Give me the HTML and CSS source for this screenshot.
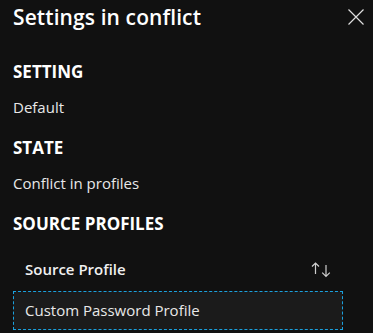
FILE: index.html
```html
<!DOCTYPE html>
<html lang="en">
  <head>
    <meta charset="UTF-8" />
    <meta name="viewport" content="width=device-width, initial-scale=1.0" />
    <title>Settings in conflict</title>
    <link rel="stylesheet" href="styles.css">
  </head>
  <body>
    <main class="panel">
      <header class="panel-header">
        <h1 class="panel-title">Settings in conflict</h1>
        <button class="close-btn" aria-label="Close">
          <svg width="16" height="16" viewBox="0 0 16 16">
            <path d="M0.5 0.5 L15.5 15.5 M15.5 0.5 L0.5 15.5" stroke="#dedede" stroke-width="1.2" fill="none" />
          </svg>
        </button>
      </header>

      <h2 class="label">SETTING</h2>
      <p class="value">Default</p>

      <h2 class="label">STATE</h2>
      <p class="value">Conflict in profiles</p>

      <h2 class="label">SOURCE PROFILES</h2>
      <div class="grid">
        <div class="grid-head">
          <span>Source Profile</span>
          <svg class="sort-icon" width="21" height="17" viewBox="0 0 21 17">
            <path d="M4.5 2 V13 M1 5.5 L4.5 2 L8 5.5" stroke="#cfcfcf" stroke-width="1.2" fill="none" />
            <path d="M15 4 V15.5 M11.2 11.7 L15 15.5 L18.8 11.7" stroke="#cfcfcf" stroke-width="1.2" fill="none" />
          </svg>
        </div>
        <div class="grid-row">Custom Password Profile</div>
      </div>
    </main>
  </body>
</html>
```

FILE: styles.css
```css
* {
  margin: 0;
  padding: 0;
  box-sizing: border-box;
}
body {
  background-color: #111111;
  color: #e8e8e8;
  font-family: "Open Sans", "Noto Sans", sans-serif;
}
.panel {
  padding: 3px 13px 0 13px;
}
.panel-header {
  display: flex;
  justify-content: space-between;
  align-items: flex-start;
}
.panel-title {
  font-size: 21px;
  font-weight: 600;
  line-height: 28px;
  color: #ffffff;
  letter-spacing: 0.1px;
}
.close-btn {
  background: none;
  border: none;
  margin-top: 6px;
  margin-right: -4px;
  cursor: pointer;
}
.label {
  font-size: 17px;
  font-weight: 700;
  line-height: 22px;
  color: #ffffff;
  margin-top: 30px;
  margin-bottom: 14px;
}
.value {
  font-size: 15px;
  line-height: 20px;
}
.value + .label {
  margin-top: 20px;
}
.grid {
  margin-top: 16px;
  width: 330px;
}
.grid-head {
  display: flex;
  justify-content: space-between;
  align-items: center;
  padding: 8px 11px 8px 12px;
  font-size: 15px;
  font-weight: 600;
  line-height: 20px;
  color: #f0f0f0;
}
.grid-row {
  margin-top: 4px;
  height: 39px;
  padding: 8px 11px;
  background-color: #1b1b1b;
  border: 1px dashed #1ba1de;
  font-size: 15px;
  line-height: 20px;
}
```
